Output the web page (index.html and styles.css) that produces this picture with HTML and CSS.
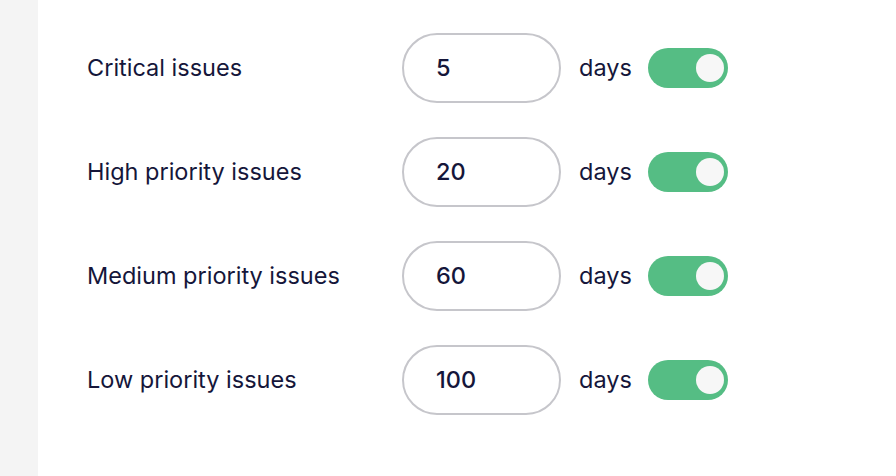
FILE: index.html
```html
<!DOCTYPE html>
<html lang="en">
<head>
    <meta charset="UTF-8">
    <meta name="viewport" content="width=device-width, initial-scale=1.0">
    <title>Issue deadlines</title>
    <link rel="stylesheet" href="styles.css">
</head>
<body>
    <div class="sidebar"></div>
    <div class="content">
        <div class="row">
            <label class="label" for="critical">Critical issues</label>
            <input type="text" class="days-input" id="critical" value="5">
            <span class="unit">days</span>
            <label class="toggle"><input type="checkbox" checked><span class="slider"></span></label>
        </div>
        <div class="row">
            <label class="label" for="high">High priority issues</label>
            <input type="text" class="days-input" id="high" value="20">
            <span class="unit">days</span>
            <label class="toggle"><input type="checkbox" checked><span class="slider"></span></label>
        </div>
        <div class="row">
            <label class="label" for="medium">Medium priority issues</label>
            <input type="text" class="days-input" id="medium" value="60">
            <span class="unit">days</span>
            <label class="toggle"><input type="checkbox" checked><span class="slider"></span></label>
        </div>
        <div class="row">
            <label class="label" for="low">Low priority issues</label>
            <input type="text" class="days-input" id="low" value="100">
            <span class="unit">days</span>
            <label class="toggle"><input type="checkbox" checked><span class="slider"></span></label>
        </div>
    </div>
</body>
</html>
```

FILE: styles.css
```css
body {
    font-family: Inter, "Noto Sans", sans-serif;
    color: #15163a;
    background-color: #fff;
    margin: 0;
    padding: 0;
    display: flex;
    height: 100vh;
}

.sidebar {
    width: 38px;
    background-color: #f4f4f4;
}

.content {
    padding: 33px 0 0 49px;
    display: flex;
    flex-direction: column;
    gap: 34px;
}

.row {
    display: flex;
    align-items: center;
    height: 70px;
}

.label {
    width: 315px;
    font-size: 23.5px;
    padding-bottom: 2px;
}

.days-input {
    box-sizing: border-box;
    width: 159px;
    height: 70px;
    border: 2px solid #c6c6cb;
    border-radius: 35px;
    padding: 0 0 2px 32px;
    font-family: inherit;
    font-size: 23.5px;
    font-weight: 500;
    color: #15163a;
    background: #fff;
    outline: none;
}

.unit {
    margin-left: 18px;
    font-size: 23.5px;
    padding-bottom: 2px;
}

.toggle {
    position: relative;
    margin-left: 16px;
    width: 80px;
    height: 40px;
}

.toggle input {
    display: none;
}

.slider {
    position: absolute;
    inset: 0;
    background: #55bd84;
    border-radius: 20px;
    cursor: pointer;
}

.slider::after {
    content: "";
    position: absolute;
    top: 6px;
    right: 4px;
    width: 28px;
    height: 28px;
    border-radius: 50%;
    background: #f7f7f7;
}
```
